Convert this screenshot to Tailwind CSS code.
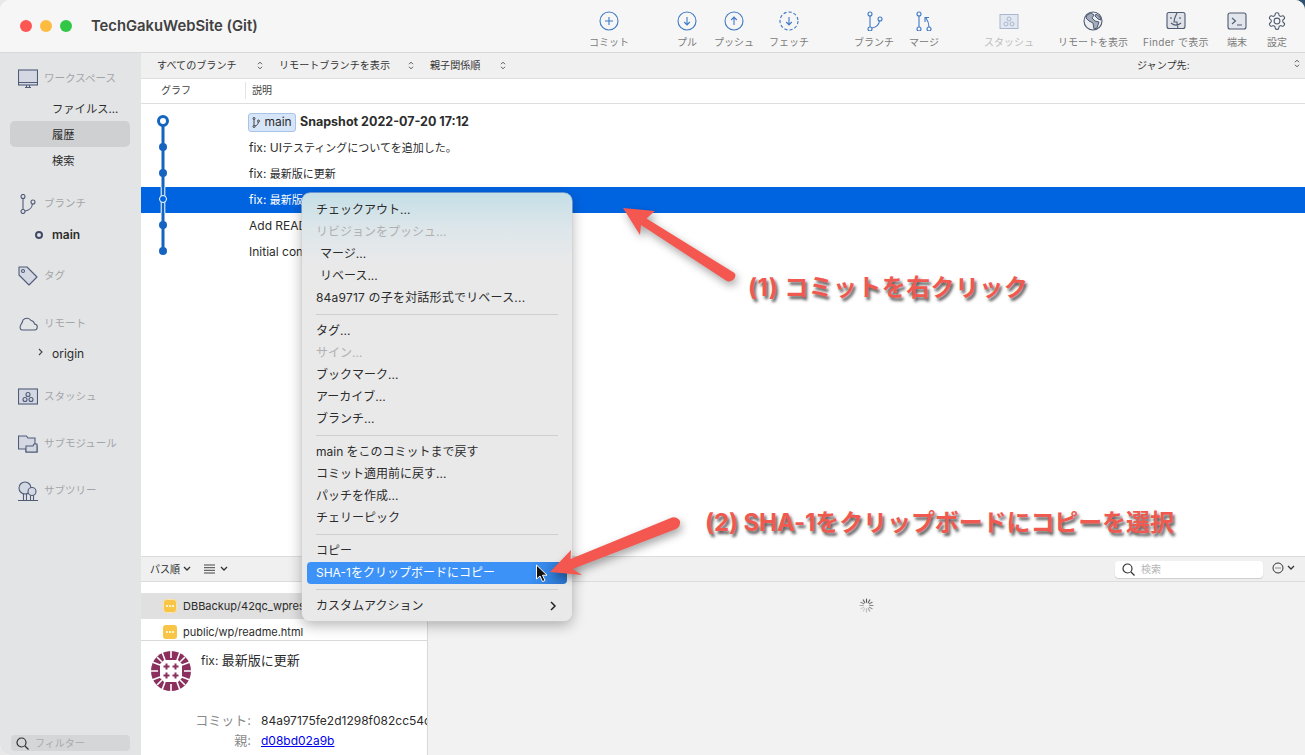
<!DOCTYPE html>
<html lang="ja">
<head>
<meta charset="utf-8">
<title>TechGakuWebSite (Git)</title>
<script src="https://cdn.jsdelivr.net/npm/@tailwindcss/browser@4"></script>
</head>
<body class="relative h-[755px] w-[1305px] overflow-hidden bg-[linear-gradient(90deg,#e8e8e8_0_50%,#31526e_50%_100%)] font-['Inter','Noto_Sans_CJK_JP',sans-serif] text-[#2c2c2c]">
<div class="flex h-full w-full flex-col overflow-hidden rounded-t-[10px] rounded-bl-[10px] bg-white">

  <!-- Title bar -->
  <header class="flex h-[53px] shrink-0 border-b border-[#d9d9d9] bg-[#f6f6f6]">
    <div class="flex w-[579px] items-center pl-[20px]">
      <span class="h-3 w-3 rounded-full bg-[#fc5753]"></span>
      <span class="ml-2 h-3 w-3 rounded-full bg-[#fdbc40]"></span>
      <span class="ml-2 h-3 w-3 rounded-full bg-[#33c748]"></span>
      <span class="ml-[19px] text-[14.800px] font-semibold text-[#414141]">TechGakuWebSite (Git)</span>
    </div>
    <div class="flex text-[10px] text-[#7b7b7b]">
      <div class="flex w-[60px] flex-col items-center pt-[11px]">
        <svg class="h-5 w-5" viewBox="0 0 20 20" fill="none" stroke="#3f79c6" stroke-width="1.1"><circle cx="10" cy="10" r="9"/><path d="M10 6v8M6 10h8"/></svg>
        <span class="mt-[5px] leading-[12px]">コミット</span>
      </div>
      <div class="ml-[31px] flex w-[34px] flex-col items-center pt-[11px]">
        <svg class="h-5 w-5" viewBox="0 0 20 20" fill="none" stroke="#3f79c6" stroke-width="1.1"><circle cx="10" cy="10" r="9"/><path d="M10 6v8M7.2 11l2.8 3 2.8-3"/></svg>
        <span class="mt-[5px] leading-[12px]">プル</span>
      </div>
      <div class="flex w-[60px] flex-col items-center pt-[11px]">
        <svg class="h-5 w-5" viewBox="0 0 20 20" fill="none" stroke="#3f79c6" stroke-width="1.1"><circle cx="10" cy="10" r="9"/><path d="M10 14V6M7.2 9l2.8-3 2.8 3"/></svg>
        <span class="mt-[5px] leading-[12px]">プッシュ</span>
      </div>
      <div class="flex w-[50px] flex-col items-center pt-[11px]">
        <svg class="h-5 w-5" viewBox="0 0 20 20" fill="none" stroke="#3f79c6" stroke-width="1.1"><circle cx="10" cy="10" r="9" stroke-dasharray="3.2 2"/><path d="M10 6v8M7.2 11l2.8 3 2.8-3"/></svg>
        <span class="mt-[5px] leading-[12px]">フェッチ</span>
      </div>
      <div class="ml-[35px] flex w-[50px] flex-col items-center pt-[11px]">
        <svg class="h-5 w-5" viewBox="0 0 20 20" fill="none" stroke="#3f79c6" stroke-width="1.1"><circle cx="6" cy="3" r="2"/><circle cx="6" cy="18" r="2"/><circle cx="16" cy="8" r="2"/><path d="M6 5v11M8 17c4-.5 7-3.500 7.500-7.200"/></svg>
        <span class="mt-[5px] leading-[12px]">ブランチ</span>
      </div>
      <div class="flex w-[50px] flex-col items-center pt-[11px]">
        <svg class="h-5 w-5" viewBox="0 0 20 20" fill="none" stroke="#3f79c6" stroke-width="1.1"><circle cx="5" cy="3" r="2"/><circle cx="5" cy="18" r="2"/><circle cx="15" cy="18" r="2"/><path d="M5 5v11M15 16c0-4-1-6-3-9M11 11V6.500h4"/></svg>
        <span class="mt-[5px] leading-[12px]">マージ</span>
      </div>
      <div class="ml-[30px] flex w-[60px] flex-col items-center pt-[11px] text-[#bdbdbd]">
        <svg class="h-5 w-5" viewBox="0 0 20 20" fill="#e3e7f0" stroke="#a9b6cf" stroke-width="1"><rect x="1" y="3.500" width="18" height="14"/><circle cx="10" cy="8" r="2"/><circle cx="7" cy="13" r="2"/><circle cx="13" cy="13" r="2"/></svg>
        <span class="mt-[5px] leading-[12px]">スタッシュ</span>
      </div>
      <div class="ml-[10px] flex w-[88px] flex-col items-center pt-[11px]">
        <svg class="h-5 w-5" viewBox="0 0 20 20" fill="#eceef2" stroke="#4d5a70" stroke-width="1.100"><circle cx="10" cy="10" r="9"/><path fill="#a4acbb" stroke="#4d5a70" stroke-width="1" d="M4 4l4-2 3 2-2 3 3 3 4 1-2 6-3 1-1-6-4-2-3-3zM13 3l4 3 1 3-3-1-3-3z"/></svg>
        <span class="mt-[5px] leading-[12px]">リモートを表示</span>
      </div>
      <div class="flex w-[78px] flex-col items-center pt-[11px]">
        <svg class="h-5 w-5" viewBox="0 0 20 20" fill="#dfe2e9" stroke="#4d5a70" stroke-width="1.100"><rect x="1" y="1.500" width="18" height="16" rx="2"/><path fill="none" d="M11 2c-2 4-3 6-3 9h3c0 3 .5 4 1 6M5 6v2M14 6v2M5 12c3 2.500 7 2.500 10 0"/></svg>
        <span class="mt-[5px] leading-[12px] tracking-[0.3px]">Finder で表示</span>
      </div>
      <div class="flex w-[44px] flex-col items-center pt-[11px]">
        <svg class="h-5 w-5" viewBox="0 0 20 20" fill="#e2e5ec" stroke="#4d5a70" stroke-width="1.100"><rect x="1" y="2" width="18" height="16" rx="2"/><path fill="none" d="M5 7l3.500 3L5 13M10 14h5"/></svg>
        <span class="mt-[5px] leading-[12px]">端末</span>
      </div>
      <div class="flex w-[36px] flex-col items-center pt-[11px]">
        <svg class="h-5 w-5" viewBox="0 0 24 24" fill="none" stroke="#4d5a70" stroke-width="1.300"><path d="M12.220 2h-.44a2 2 0 0 0-2 2v.18a2 2 0 0 1-1 1.730l-.43.250a2 2 0 0 1-2 0l-.15-.08a2 2 0 0 0-2.730.730l-.22.380a2 2 0 0 0 .730 2.730l.15.100a2 2 0 0 1 1 1.720v.510a2 2 0 0 1-1 1.740l-.15.090a2 2 0 0 0-.730 2.730l.22.380a2 2 0 0 0 2.730.730l.15-.08a2 2 0 0 1 2 0l.43.250a2 2 0 0 1 1 1.730V20a2 2 0 0 0 2 2h.44a2 2 0 0 0 2-2v-.18a2 2 0 0 1 1-1.730l.43-.25a2 2 0 0 1 2 0l.15.080a2 2 0 0 0 2.730-.730l.22-.39a2 2 0 0 0-.730-2.730l-.15-.08a2 2 0 0 1-1-1.740v-.5a2 2 0 0 1 1-1.740l.15-.09a2 2 0 0 0 .730-2.730l-.22-.38a2 2 0 0 0-2.730-.730l-.15.080a2 2 0 0 1-2 0l-.43-.25a2 2 0 0 1-1-1.730V4a2 2 0 0 0-2-2z"/><circle cx="12" cy="12" r="3.500"/></svg>
        <span class="mt-[5px] leading-[12px]">設定</span>
      </div>
    </div>
  </header>

  <div class="flex min-h-0 flex-1">
    <!-- Sidebar -->
    <aside class="flex w-[141px] shrink-0 flex-col bg-[#e3e4e6] pt-[12px] text-[12px]">
      <div class="flex h-[26px] items-center pl-[18px] pt-[2px] text-[10.500px] text-[#a3a4a8]">
        <svg class="mr-[6px] h-5 w-5" viewBox="0 0 20 20" fill="#d3d8e3" stroke="#4f5b77" stroke-width="1.100"><rect x=".5" y="1" width="19" height="15"/><path fill="none" d="M.5 13.500h19M7 18.500h6M8.500 16v2.500M11.500 16v2.500"/></svg>
        ワークスペース
      </div>
      <div class="mt-[4px] flex h-[26px] items-center pl-[52px] pt-[2px] text-[11.300px]">ファイルス…</div>
      <div class="ml-[10px] mr-[11px] flex h-[26px] items-center rounded-[5px] bg-[#cfd0d1] pl-[42px] pt-[2px] text-[11.300px]">履歴</div>
      <div class="flex h-[26px] items-center pl-[52px] pt-[2px] text-[11.300px]">検索</div>
      <div class="mt-[17px] flex h-[26px] items-center pl-[18px] pt-[2px] text-[10.500px] text-[#a3a4a8]">
        <svg class="mr-[6px] h-5 w-5" viewBox="0 0 20 20" fill="none" stroke="#4f5b77" stroke-width="1.100"><circle cx="5" cy="2.500" r="2"/><circle cx="5" cy="17.500" r="2"/><circle cx="15" cy="8" r="2"/><path d="M5 4.500v11M7 17c4-.5 7-3.500 7.500-7"/></svg>
        ブランチ
      </div>
      <div class="mt-[6px] flex h-[26px] items-center pl-[35px] font-semibold">
        <span class="mr-[9px] h-2 w-2 rounded-full border-2 border-[#434a66]"></span>main
      </div>
      <div class="mt-[14px] flex h-[26px] items-center pl-[18px] pt-[2px] text-[10.500px] text-[#a3a4a8]">
        <svg class="mr-[6px] h-5 w-5" viewBox="0 0 20 20" fill="#d3d8e3" stroke="#4f5b77" stroke-width="1.100"><path d="M1 1h8l10 10-8 8L1 9z" stroke-linejoin="round"/><circle cx="5" cy="5" r="1.500"/></svg>
        タグ
      </div>
      <div class="mt-[22px] flex h-[26px] items-center pl-[18px] pt-[2px] text-[10.500px] text-[#a3a4a8]">
        <svg class="mr-[6px] h-5 w-5" viewBox="0 0 20 20" fill="#e3e4e6" stroke="#4f5b77" stroke-width="1.100"><path d="M4 16h12a3 3 0 0 0 .5-6 4 4 0 0 0-3.500-3.500A5 5 0 0 0 5 6c-.5 2-1 3-2 4.500-1.500 2.500-1 5.500 1 5.500z"/></svg>
        リモート
      </div>
      <div class="mt-[5px] flex h-[26px] items-center pl-[38px]">
        <svg class="mb-[5px] mr-[9px] h-[8px] w-[5px]" viewBox="0 0 5 8" fill="none" stroke="#444" stroke-width="1.100"><path d="M1 1l3 3-3 3"/></svg>
        origin
      </div>
      <div class="mt-[16px] flex h-[26px] items-center pl-[18px] pt-[2px] text-[10.500px] text-[#a3a4a8]">
        <svg class="mr-[6px] h-5 w-5" viewBox="0 0 20 20" fill="#d3d8e3" stroke="#4f5b77" stroke-width="1.100"><rect x=".5" y="2" width="19" height="15"/><circle cx="10" cy="7.500" r="2"/><circle cx="7" cy="12.500" r="2"/><circle cx="13" cy="12.500" r="2"/></svg>
        スタッシュ
      </div>
      <div class="mt-[21px] flex h-[26px] items-center pl-[18px] pt-[2px] text-[10.500px] text-[#a3a4a8]">
        <svg class="mr-[6px] h-5 w-5" viewBox="0 0 20 20" fill="#d3d8e3" stroke="#4f5b77" stroke-width="1.100"><path d="M.5 2h8l1.500 2h7v8h2v6H8v-3H.5z"/><path d="M8 12h7l1-2h3v8H8z"/></svg>
        サブモジュール
      </div>
      <div class="mt-[21px] flex h-[26px] items-center pl-[18px] pt-[2px] text-[10.500px] text-[#a3a4a8]">
        <svg class="mr-[6px] h-5 w-5" viewBox="0 0 20 20" fill="#d3d8e3" stroke="#4f5b77" stroke-width="1.100"><circle cx="7" cy="7" r="6"/><circle cx="14" cy="10.500" r="4"/><path fill="none" d="M0 19.500h20M5.500 13v6.500M8.500 13v6.500M12.500 14.500v5M15.500 14.500v5"/></svg>
        サブツリー
      </div>
      <div class="mx-[11px] mb-[4px] mt-auto flex h-4 items-center rounded-[4px] bg-[#d5d6d8] pl-[5px] text-[10px] text-[#a9a9ab]">
        <svg class="mr-[6px] h-[13px] w-[13px]" viewBox="0 0 13 13" fill="none" stroke="#2f2f2f" stroke-width="1.200"><circle cx="5.500" cy="5.500" r="4.500"/><path d="M9 9l3.500 3.500"/></svg>
        フィルター
      </div>
    </aside>

    <!-- Main -->
    <main class="flex min-w-0 flex-1 flex-col">
      <div class="relative flex h-[26px] shrink-0 items-center border-b border-[#dedede] bg-[#f0f0f0] pl-[16px] text-[10.100px] text-[#333]">
        <span class="w-[100px]">すべてのブランチ</span>
        <svg class="h-[9px] w-[6px]" viewBox="0 0 6 9" fill="none" stroke="#555"><path d="M1 3.200L3 1.200l2 2M1 5.800l2 2 2-2"/></svg>
        <span class="ml-[16px] w-[129px]">リモートブランチを表示</span>
        <svg class="h-[9px] w-[6px]" viewBox="0 0 6 9" fill="none" stroke="#555"><path d="M1 3.200L3 1.200l2 2M1 5.800l2 2 2-2"/></svg>
        <span class="ml-[16px] w-[70px]">親子関係順</span>
        <svg class="h-[9px] w-[6px]" viewBox="0 0 6 9" fill="none" stroke="#555"><path d="M1 3.200L3 1.200l2 2M1 5.800l2 2 2-2"/></svg>
        <span class="ml-[631px] w-[157px]">ジャンプ先:</span>
        <svg class="mb-[4px] h-[9px] w-[6px]" viewBox="0 0 6 9" fill="none" stroke="#555"><path d="M1 3.200L3 1.200l2 2M1 5.800l2 2 2-2"/></svg>
      </div>
      <div class="flex h-[25px] shrink-0 items-center border-b border-[#dedede] bg-white pb-[2px] text-[10px] text-[#444]">
        <span class="w-[105px] border-r border-[#e4e4e4] pl-[20px] leading-[17px]">グラフ</span>
        <span class="pl-[6px]">説明</span>
      </div>

      <!-- Commit rows -->
      <div class="relative flex-1 overflow-hidden bg-white pt-[5px] text-[12px]">
        <div class="flex h-[26px] items-center pl-[107px]">
          <span class="mr-[4px] flex h-[19px] w-[48px] items-center justify-center rounded-[3px] border border-[#a9c3e6] bg-[#d7e5f8]">
            <svg class="mr-[4px] h-[11px] w-[8px]" viewBox="0 0 8 11" fill="none" stroke="#333" stroke-width=".9"><circle cx="2" cy="1.500" r="1"/><circle cx="2" cy="9.500" r="1"/><circle cx="6.500" cy="4" r="1"/><path d="M2 2.500v6M3 9c2-.3 3-2 3.300-4"/></svg>
            main
          </span>
          <span class="text-[12.500px] font-bold">Snapshot 2022-07-20 17:12</span>
        </div>
        <div class="flex h-[26px] items-center pl-[108px]"><span>fix: UI<span class="text-[11px]">テスティングについてを追加した。</span></span></div>
        <div class="flex h-[26px] items-center pl-[108px]"><span>fix: <span class="text-[11px]">最新版に更新</span></span></div>
        <div class="flex h-[26px] items-center bg-[#0064e1] pl-[108px] text-white"><span>fix: <span class="text-[11px]">最新版に更新</span></span></div>
        <div class="flex h-[26px] items-center pl-[108px]">Add README.md</div>
        <div class="flex h-[26px] items-center pl-[108px]">Initial commit</div>

        <svg class="absolute left-[12px] top-[4px] h-[150px] w-[20px]" viewBox="0 0 20 150" fill="none">
          <path d="M10 13v130" stroke="#1565c0" stroke-width="3"/>
          <path d="M8.200 79v26M11.800 79v26" stroke="#fff" stroke-width="1"/>
          <circle cx="10" cy="13" r="4.500" fill="#fff" stroke="#1565c0" stroke-width="3"/>
          <circle cx="10" cy="39" r="4" fill="#1565c0"/>
          <circle cx="10" cy="65" r="4" fill="#1565c0"/>
          <circle cx="10" cy="91" r="3.500" fill="#0064e1" stroke="#fff"/>
          <circle cx="10" cy="117" r="4" fill="#1565c0"/>
          <circle cx="10" cy="143" r="4" fill="#1565c0"/>
        </svg>
      </div>

      <!-- Lower pane -->
      <div class="flex h-[26px] shrink-0 items-center border-y border-[#dcdcdc] bg-[#f0f0f0] pl-[9px] text-[10px]">
        <span>パス順</span>
        <svg class="ml-[3px] h-[6px] w-[8px]" viewBox="0 0 8 6" fill="none" stroke="#333" stroke-width="1.300"><path d="M1 1l3 3 3-3"/></svg>
        <svg class="ml-[13px] h-[10px] w-[11px]" viewBox="0 0 11 10" stroke="#444"><path d="M0 1h11M0 3.700h11M0 6.300h11M0 9h11"/></svg>
        <svg class="ml-[5px] h-[6px] w-[8px]" viewBox="0 0 8 6" fill="none" stroke="#333" stroke-width="1.300"><path d="M1 1l3 3 3-3"/></svg>
        <span class="ml-[887px] flex h-[17px] w-[148px] items-center rounded-[4px] bg-white pl-[7px] pt-[1px] text-[#b5b5b5] shadow-[0_1px_1px_#ccc]">
          <svg class="mr-[6px] h-[13px] w-[13px]" viewBox="0 0 13 13" fill="none" stroke="#333" stroke-width="1.200"><circle cx="5.500" cy="5.500" r="4.500"/><path d="M9 9l3.500 3.500"/></svg>
          検索
        </span>
        <svg class="mb-[3px] ml-[9px] h-[12px] w-[12px]" viewBox="0 0 12 12" fill="none" stroke="#333"><circle cx="6" cy="6" r="5"/><path d="M3.500 6h1M5.500 6h1M7.500 6h1"/></svg>
        <svg class="mb-[3px] ml-[3px] h-[6px] w-[8px]" viewBox="0 0 8 6" fill="none" stroke="#333" stroke-width="1.300"><path d="M1 1l3 3 3-3"/></svg>
      </div>
      <div class="flex h-[173px] shrink-0 overflow-hidden">
        <div class="w-[287px] shrink-0 overflow-hidden border-r border-[#d9d9d9] bg-white text-[11px]">
          <div class="h-[59px] border-b border-[#d9d9d9] pt-[11px]">
            <div class="flex h-[26px] items-center whitespace-nowrap bg-[#e0e0e0] pl-[22px]">
              <svg class="mr-[6px] h-[14px] w-[14px]" viewBox="0 0 14 14"><rect x=".5" y=".5" width="13" height="13" rx="3" fill="#f8c546" stroke="#fbe3ab"/><g fill="#fff"><circle cx="4" cy="7" r="1"/><circle cx="7" cy="7" r="1"/><circle cx="10" cy="7" r="1"/></g></svg>DBBackup/42qc_wpress_backup.sql
            </div>
            <div class="flex h-[26px] items-center pl-[22px]">
              <svg class="mr-[6px] h-[14px] w-[14px]" viewBox="0 0 14 14"><rect width="14" height="14" rx="3" fill="#f8c546"/><g fill="#fff"><circle cx="4" cy="7" r="1"/><circle cx="7" cy="7" r="1"/><circle cx="10" cy="7" r="1"/></g></svg>public/wp/readme.html
            </div>
          </div>
          <div class="relative h-[114px] whitespace-nowrap text-[12px]">
            <svg class="absolute left-[10px] top-[10px] h-[40px] w-[40px]" viewBox="0 0 40 40">
              <circle cx="20" cy="20" r="20" fill="#8b2f5e"/>
              <path d="M20 0v7M20 33v7M0 20h7M33 20h7M6 6l5 5M29 29l5 5M34 6l-5 5M11 29l-5 5M11 1l3 8M29 39l-3-8M39 11l-8 3M1 29l8-3M29 1l-3 8M11 39l3-8M1 11l8 3M39 29l-8-3" stroke="#fff" stroke-width="1.600"/>
              <path d="M9 13l4-4h14l4 4v14l-4 4H13l-4-4z" fill="#fff"/>
              <g fill="#8b2f5e">
                <path d="M14.500 13h2v2h2v2h-2v2h-2v-2h-2v-2h2z" transform="translate(0 -.5)"/>
                <path d="M25.500 13h2v2h2v2h-2v2h-2v-2h-2v-2h2z" transform="translate(-2 -.5)"/>
                <path d="M14.500 24h2v2h2v2h-2v2h-2v-2h-2v-2h2z" transform="translate(0 -2.500)"/>
                <path d="M25.500 24h2v2h2v2h-2v2h-2v-2h-2v-2h2z" transform="translate(-2 -2.500)"/>
              </g>
            </svg>
            <div class="pl-[60px] pt-[11px] leading-[16px]">fix: <span class="text-[13px]">最新版に更新</span></div>
            <div class="mt-[42px] flex h-[20px] items-center">
              <span class="w-[110px] shrink-0 text-right text-[13px] text-[#8a8a8a]">コミット:</span>
              <span class="ml-[10px]">84a97175fe2d1298f082cc54c</span>
            </div>
            <div class="flex h-[20px] items-center">
              <span class="w-[110px] shrink-0 text-right text-[13px] text-[#8a8a8a]">親:</span>
              <span class="ml-[10px] text-[#0000ee] underline">d08bd02a9b</span>
            </div>
          </div>
        </div>
        <div class="flex flex-1 justify-center bg-[#f2f2f2] pt-[16px]">
          <svg class="h-[15px] w-[15px]" viewBox="0 0 16 16" fill="none" stroke-width="1.200" stroke-linecap="round">
            <path d="M8 1v3.500" stroke="#555"/><path d="M11.500 2l-1.700 3" stroke="#666"/><path d="M14 4.500l-3 1.700" stroke="#777"/><path d="M15 8h-3.500" stroke="#888"/><path d="M14 11.500l-3-1.700" stroke="#999"/><path d="M11.500 14l-1.700-3" stroke="#aaa"/><path d="M8 15v-3.500" stroke="#bbb"/><path d="M4.500 14l1.700-3" stroke="#ccc"/><path d="M2 11.500l3-1.700" stroke="#ccc"/><path d="M1 8h3.500" stroke="#aaa"/><path d="M2 4.500l3 1.700" stroke="#888"/><path d="M4.500 2l1.700 3" stroke="#666"/>
          </svg>
        </div>
      </div>
    </main>
  </div>
</div>

<!-- Context menu -->
<div class="absolute left-[302px] top-[193px] h-[428px] w-[270px] rounded-[8px] bg-[linear-gradient(180deg,#c4dfe6_0,#dde6ea_35px,#e9e9ea_70px,#e9e9ea_100%)] pb-[4px] pt-[6px] text-[12px] shadow-[0_0_0_0.5px_#cfcfcf,0_4px_14px_rgba(0,0,0,0.3)]">
  <div class="flex h-[22px] items-center pl-[14px]">チェックアウト...</div>
  <div class="flex h-[22px] items-center pl-[14px] text-[#b0b0b0]">リビジョンをプッシュ...</div>
  <div class="flex h-[22px] items-center pl-[18px]">マージ...</div>
  <div class="flex h-[22px] items-center pl-[18px]">リベース...</div>
  <div class="flex h-[22px] items-center pl-[14px] tracking-[0.2px]">84a9717 の子を対話形式でリベース...</div>
  <div class="flex h-[11px] items-center px-[14px]"><div class="h-px w-full bg-[#cfcfcf]"></div></div>
  <div class="flex h-[22px] items-center pl-[14px]">タグ...</div>
  <div class="flex h-[22px] items-center pl-[14px] text-[#b0b0b0]">サイン...</div>
  <div class="flex h-[22px] items-center pl-[14px]">ブックマーク...</div>
  <div class="flex h-[22px] items-center pl-[14px]">アーカイブ...</div>
  <div class="flex h-[22px] items-center pl-[14px]">ブランチ...</div>
  <div class="flex h-[11px] items-center px-[14px]"><div class="h-px w-full bg-[#cfcfcf]"></div></div>
  <div class="flex h-[22px] items-center pl-[14px]">main をこのコミットまで戻す</div>
  <div class="flex h-[22px] items-center pl-[14px]">コミット適用前に戻す...</div>
  <div class="flex h-[22px] items-center pl-[14px]">パッチを作成...</div>
  <div class="flex h-[22px] items-center pl-[14px]">チェリーピック</div>
  <div class="flex h-[11px] items-center px-[14px]"><div class="h-px w-full bg-[#cfcfcf]"></div></div>
  <div class="flex h-[22px] items-center pl-[14px]">コピー</div>
  <div class="mx-[5px] flex h-[22px] items-center rounded-[4px] bg-[linear-gradient(100deg,#3d92f7_0,#3d92f7_85%,#2a72c8_100%)] pl-[9px] text-white">SHA-1をクリップボードにコピー</div>
  <div class="flex h-[11px] items-center px-[14px]"><div class="h-px w-full bg-[#cfcfcf]"></div></div>
  <div class="flex h-[22px] items-center justify-between pl-[14px] pr-[15px]">カスタムアクション
    <svg class="h-[10px] w-[7px]" viewBox="0 0 7 10" fill="none" stroke="#222" stroke-width="1.500"><path d="M1 1l4 4-4 4"/></svg>
  </div>
</div>

<!-- Annotations -->
<svg class="pointer-events-none absolute left-0 top-0 h-[755px] w-[1305px] drop-shadow-[2px_4px_4px_rgba(0,0,0,0.35)]" viewBox="0 0 1305 755">
  <path d="M623 208 L655 211 L646.500 218.500 L734.500 273 Q737 276 733 280 Q729 282.500 726 280.500 L641 225 L640 235 Z" fill="#f4574f"/>
  <path d="M550 572 L571 550 L570.500 559 L672 517.500 Q677 516.500 680 521 Q681 526 676 529 L572.500 569 L582 575 Z" fill="#f4574f"/>
</svg>
<svg class="absolute left-[535px] top-[564px] h-[19px] w-[13px]" viewBox="0 0 13 19"><path d="M1.500 1v14l3.500-3 2.500 5.500 2.500-1-2.500-5.300h4.500z" fill="#111" stroke="#fff" stroke-width="1"/></svg>
<div class="absolute left-[748px] top-[272px] whitespace-nowrap text-[24px] font-bold leading-[32px] tracking-[0.4px] text-[#f0594f] [-webkit-text-stroke:3px_#fff] [paint-order:stroke_fill] [text-shadow:2px_3px_3px_rgba(0,0,0,0.65)]">(1) コミットを右クリック</div>
<div class="absolute left-[705px] top-[507px] whitespace-nowrap text-[24px] font-bold leading-[32px] tracking-[-0.1px] text-[#f0594f] [-webkit-text-stroke:3px_#fff] [paint-order:stroke_fill] [text-shadow:2px_3px_3px_rgba(0,0,0,0.65)]">(2) SHA-1をクリップボードにコピーを選択</div>
</body>
</html>
